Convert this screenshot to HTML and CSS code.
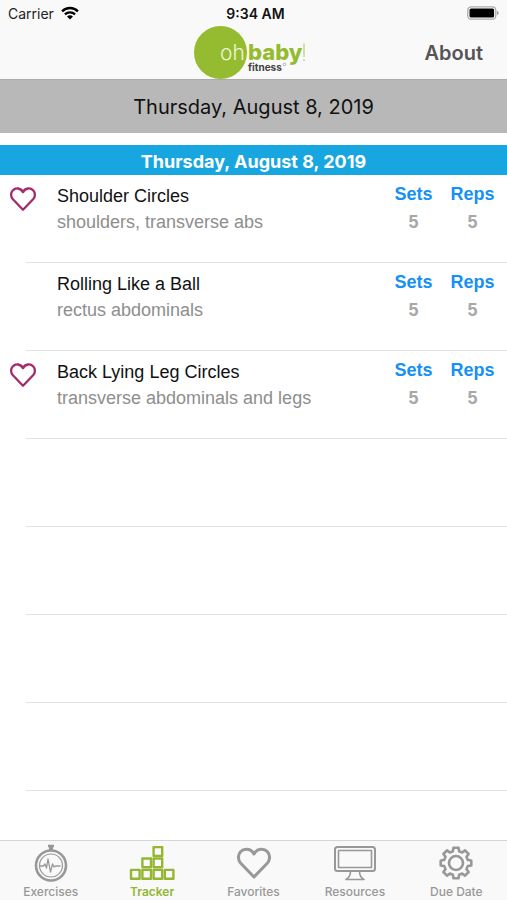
FILE: index.html
```
<!DOCTYPE html>
<html lang="en">
<head>
<meta charset="utf-8">
<meta name="viewport" content="width=device-width, initial-scale=1">
<title>Tracker</title>
<link rel="stylesheet" href="styles.css">
</head>
<body>
<svg width="0" height="0" class="defs" aria-hidden="true">
  <symbol id="heart" viewBox="0 0 34 32">
    <path d="M17 30 3.500 16C.8 13 .8 7.800 3.500 4.800 7.200.900 14 1.200 17 7c3-5.800 9.800-6.100 13.500-2.200C33.200 7.800 33.200 13 30.500 16Z" fill="none" stroke="currentColor" stroke-width="3" stroke-linejoin="round"/>
  </symbol>
</svg>
<header class="header">
  <div class="status">
    <span class="carrier">Carrier
      <svg class="wifi" viewBox="0 0 17 13" aria-hidden="true"><g fill="none" stroke="#000" stroke-width="2.200"><path d="M1 4.900C5.200.7 11.800.7 16 4.900"/><path d="M3.700 7.800c2.700-2.600 6.900-2.600 9.600 0"/></g><path d="M5.700 9.800c1.600-1.500 4-1.500 5.600 0L8.500 12.700Z"/></svg>
    </span>
    <span class="time">9:34 AM</span>
    <svg class="battery" viewBox="0 0 32 14" aria-hidden="true"><rect x=".8" y=".8" width="28" height="12.400" rx="3.500" fill="#fff" stroke="#aaa" stroke-width="1.300"/><rect x="2.500" y="2.500" width="24.600" height="9" rx="1.500"/><path d="M30 5c2 .6 2 3.400 0 4Z" fill="#999"/></svg>
  </div>
  <div class="nav">
    <svg class="logo" viewBox="0 0 122 54" role="img" aria-label="oh baby! fitness">
      <circle cx="27.500" cy="26.500" r="26.500" fill="#95bb30"/>
      <text x="27" y="34" class="logo-oh">oh</text>
      <text x="55" y="34" class="logo-baby">baby</text>
      <path d="M111 17.500V31M111 33v2" stroke="#a9c85a" fill="none"/>
      <text x="55" y="45" class="logo-fitness">fitness</text>
      <circle cx="91.500" cy="38.500" r="1.300" fill="none" stroke="#888" stroke-width=".6"/>
    </svg>
    <button class="about" type="button">About</button>
  </div>
</header>
<main class="main">
  <button class="date" type="button">Thursday, August 8, 2019</button>
  <h1 class="section">Thursday, August 8, 2019</h1>
  <ul class="list">
    <li class="row">
      <svg class="fav"><use href="#heart"/></svg>
      <div class="info"><h2>Shoulder Circles</h2><p>shoulders, transverse abs</p></div>
      <dl class="stats"><div><dt>Sets</dt><dd>5</dd></div><div><dt>Reps</dt><dd>5</dd></div></dl>
    </li>
    <li class="row">
      <div class="info"><h2>Rolling Like a Ball</h2><p>rectus abdominals</p></div>
      <dl class="stats"><div><dt>Sets</dt><dd>5</dd></div><div><dt>Reps</dt><dd>5</dd></div></dl>
    </li>
    <li class="row">
      <svg class="fav"><use href="#heart"/></svg>
      <div class="info"><h2>Back Lying Leg Circles</h2><p>transverse abdominals and legs</p></div>
      <dl class="stats"><div><dt>Sets</dt><dd>5</dd></div><div><dt>Reps</dt><dd>5</dd></div></dl>
    </li>
    <li class="row"></li>
    <li class="row"></li>
    <li class="row"></li>
    <li class="row"></li>
  </ul>
</main>
<nav class="tabs">
  <a class="tab" href="#exercises">
    <svg class="icon" viewBox="0 0 44 38" aria-hidden="true"><g fill="none" stroke="currentColor"><circle cx="22" cy="21.500" r="15" stroke-width="2.600"/><circle cx="22" cy="21.500" r="11.500" stroke-width="1.200"/><path d="M19 2h6" stroke-width="2.600"/><path d="M22 3v3" stroke-width="4"/><path d="M11 22h3.500l1.500-2 1.500 4 1.500-9 2.500 13 2-8 1.500 3 1.500-1h5" stroke-width="1.300" stroke-linejoin="round"/></g></svg>
    <span>Exercises</span>
  </a>
  <a class="tab active" href="#tracker" aria-current="page">
    <svg class="icon tracker" viewBox="0 0 46 38" aria-hidden="true"><g fill="none" stroke="currentColor" stroke-width="2.400" stroke-linejoin="round"><rect x="24.600" y="3.100" width="8.600" height="8.800"/><rect x="13.400" y="14.500" width="8.600" height="8.800"/><rect x="24.600" y="14.500" width="8.600" height="8.800"/><rect x="2" y="25.900" width="8.600" height="8.800"/><rect x="13.400" y="25.900" width="8.600" height="8.800"/><rect x="24.600" y="25.900" width="8.600" height="8.800"/><rect x="35.800" y="25.900" width="8.600" height="8.800"/></g></svg>
    <span>Tracker</span>
  </a>
  <a class="tab" href="#favorites">
    <svg class="icon" viewBox="0 0 44 38" aria-hidden="true"><use href="#heart" x="5" y="3" width="34" height="32"/></svg>
    <span>Favorites</span>
  </a>
  <a class="tab" href="#resources">
    <svg class="icon" viewBox="0 0 44 38" aria-hidden="true"><g fill="none" stroke="currentColor" stroke-width="1.600" stroke-linejoin="round"><rect x="2" y="3" width="40" height="24" rx="2.500" stroke-width="2"/><rect x="5.500" y="6.500" width="33" height="17"/><path d="M17.500 27.500c0 4-1 6-4.500 8h18c-3.500-2-4.500-4-4.500-8"/></g></svg>
    <span>Resources</span>
  </a>
  <a class="tab" href="#due-date">
    <svg class="icon" viewBox="0 0 44 38" aria-hidden="true"><g transform="translate(22 19)" fill="none" stroke="currentColor" stroke-width="2.600" stroke-linejoin="round"><path d="M-3.050-11.800-2.560-15.290H2.560L3.050-11.800 6.190-10.500 9-12.620 12.620-9 10.500-6.190 11.800-3.050 15.290-2.560V2.560L11.800 3.050 10.500 6.190 12.620 9 9 12.620 6.190 10.500 3.050 11.800 2.560 15.290H-2.560L-3.050 11.800-6.190 10.500-9 12.620-12.620 9-10.500 6.190-11.800 3.050-15.290 2.560V-2.560L-11.800-3.050-10.500-6.190-12.620-9-9-12.620-6.190-10.500Z"/><circle r="7"/></g></svg>
    <span>Due Date</span>
  </a>
</nav>
</body>
</html>
```
FILE: styles.css
```
* { box-sizing: border-box; margin: 0; padding: 0; }
body {
  display: flex;
  flex-direction: column;
  height: 100vh;
  background: #fff;
  color: #111;
  font-family: Inter, "Liberation Sans", sans-serif;
}
button { border: 0; background: none; font: inherit; color: inherit; }
.defs { position: absolute; }
.header { background: #f9f9f9; }
.status {
  display: grid;
  grid-template-columns: 1fr auto 1fr;
  align-items: center;
  height: 26px;
  padding: 0 8px;
  font-size: 14px;
  color: #222;
}
.carrier { display: flex; align-items: center; gap: 7px; }
.wifi { width: 18px; height: 14px; }
.time { padding-left: 4px; font-weight: 600; color: #111; }
.battery { width: 32px; height: 14px; justify-self: end; }
.nav {
  display: grid;
  grid-template-columns: 1fr auto 1fr;
  align-items: center;
  height: 53px;
  padding: 0 24px;
}
.logo { grid-column: 2; width: 122px; height: 54px; }
.logo-oh { font: 300 21px Inter, sans-serif; fill: #eef5d8; }
.logo-baby { font: 800 22px Inter, sans-serif; fill: #95bb30; }
.logo-fitness { font: 700 10px Inter, sans-serif; fill: #444; }
.about { justify-self: end; font-size: 20px; font-weight: 600; color: #555; }
.main { display: flex; flex-direction: column; flex: 1; min-height: 0; overflow: hidden; }
.date {
  flex: none;
  height: 54px;
  margin-bottom: 12px;
  background: #b8b8b8;
  border-top: 1px solid #aaa;
  font-size: 20px;
}
.section {
  flex: none;
  height: 30px;
  padding-top: 2px;
  background: #18a6e1;
  color: #fff;
  font-size: 18px;
  font-weight: 700;
  line-height: 30px;
  text-align: center;
}
.list { list-style: none; padding-left: 26px; font-family: "Liberation Sans", Arial, sans-serif; }
.row {
  position: relative;
  display: flex;
  justify-content: space-between;
  height: 88px;
  padding: 8px 5px 0 31px;
  border-bottom: 1px solid #e2e2e2;
}
.fav { position: absolute; left: -16px; top: 11px; width: 26px; height: 26px; color: #a52a6c; }
.info { padding-top: 1px; }
.info h2 { font-size: 18px; font-weight: 400; line-height: 24px; }
.info p { font-size: 18px; line-height: 28px; color: #8e8e8e; }
.stats { display: flex; text-align: center; font-weight: 700; font-size: 18px; }
.stats div { width: 59px; }
.stats dt { line-height: 22px; color: #1590f5; }
.stats dd { line-height: 34px; color: #a8a8a8; }
.tabs {
  display: flex;
  flex: none;
  height: 60px;
  border-top: 1px solid #d5d5d5;
  background: #f9f9f9;
}
.tab {
  display: flex;
  flex: 1;
  flex-direction: column;
  align-items: center;
  padding-top: 3px;
  color: #989898;
  font-size: 12px;
  font-weight: 500;
  line-height: 16px;
  text-decoration: none;
}
.icon { width: 44px; height: 38px; margin-bottom: 2px; }
.tracker { width: 46px; }
.active { color: #94b632; font-weight: 600; }
```
